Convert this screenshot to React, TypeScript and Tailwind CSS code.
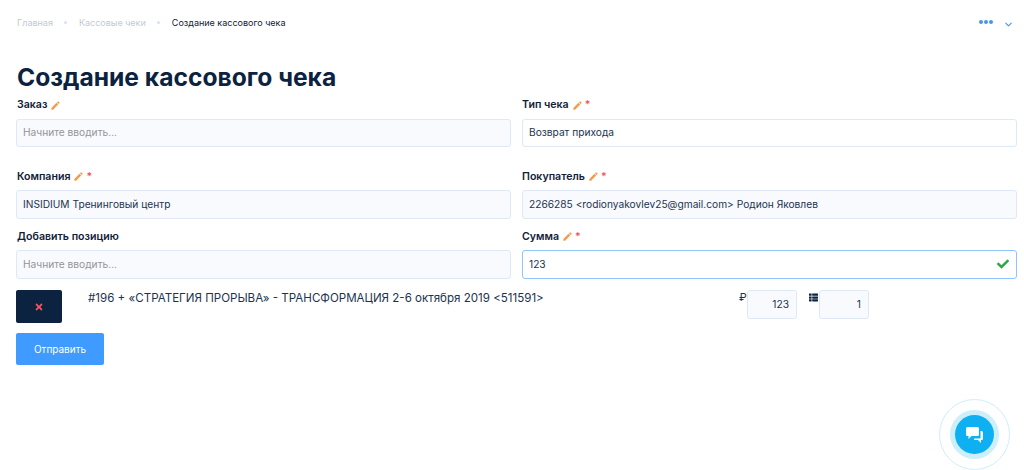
import { MdEdit } from "react-icons/md";
import { FaCheck, FaThList, FaTimes } from "react-icons/fa";
import { ChevronDown } from "lucide-react";

const font = { fontFamily: "Inter, 'Noto Sans', sans-serif" };

const Label = ({ text, required }: { text: string; required?: boolean }) => (
  <div className="flex items-center h-[14px] text-[10.6px] leading-[14px] font-semibold text-[#0f2138]">
    <span>{text}</span>
    {text !== "Добавить позицию" && <MdEdit className="ml-[3px] text-[11px] text-[#f59a4c]" />}
    {required && <span className="ml-[2px] text-[#f8535e]">*</span>}
  </div>
);

const Field = ({
  value,
  placeholder,
  white,
  active,
}: {
  value?: string;
  placeholder?: string;
  white?: boolean;
  active?: boolean;
}) => (
  <div
    className={`mt-[6.5px] flex h-[28.5px] items-center justify-between rounded-[3px] border px-[6px] text-[10.2px] ${
      active ? "border-[#90c4fb] bg-white" : white ? "border-[#dfe9f5] bg-white" : "border-[#dfe9f5] bg-[#f8fafd]"
    } ${value ? "text-[#1c3350]" : "text-[#939598]"}`}
  >
    <span>{value || placeholder}</span>
    {active && <FaCheck className="mr-[1px] text-[12px] text-[#28a745]" />}
  </div>
);

const SmallBox = ({ value }: { value: string }) => (
  <div className="flex h-[29px] w-[50px] items-center justify-end rounded-[3px] border border-[#dfe9f5] bg-[#f8fafd] pr-[7px] text-[10.2px] text-[#1c3350]">
    {value}
  </div>
);

const App = () => {
  return (
    <div className="relative h-[470px] w-[1024px] overflow-hidden bg-white" style={font}>
      <div className="flex h-[44px] items-center justify-between pl-[17px] pr-[10px]">
        <div className="flex items-center text-[9px] mt-[1px]">
          <span className="text-[#bfcad6]">Главная</span>
          <span className="mx-[11.5px] h-[3px] w-[3px] rounded-full bg-[#d4e4f6]" />
          <span className="text-[#bfcad6]">Кассовые чеки</span>
          <span className="mx-[11.5px] h-[3px] w-[3px] rounded-full bg-[#d4e4f6]" />
          <span className="text-[#0f2138]">Создание кассового чека</span>
        </div>
        <div className="flex items-center">
          <div className="flex gap-[1px]">
            <span className="h-[4px] w-[4px] rounded-full bg-[#4a94f0]" />
            <span className="h-[4px] w-[4px] rounded-full bg-[#4a94f0]" />
            <span className="h-[4px] w-[4px] rounded-full bg-[#4a94f0]" />
          </div>
          <ChevronDown className="ml-[10px] mt-[4px] h-[11px] w-[11px] text-[#4a94f0]" strokeWidth={2.5} />
        </div>
      </div>

      <div className="px-[16px]">
        <h1 className="mt-[17px] h-[32px] pl-[1px] text-[24.6px] font-bold leading-[32px] text-[#0b2340]">
          Создание кассового чека
        </h1>

        <div className="mt-[5px] grid grid-cols-[495px_495px] gap-x-[11px]">
          <div className="h-[71.5px]">
            <div className="pl-[1px]">
              <Label text="Заказ" />
            </div>
            <Field placeholder="Начните вводить..." />
          </div>
          <div className="h-[71.5px]">
            <Label text="Тип чека" required />
            <Field value="Возврат прихода" white />
          </div>
          <div className="h-[60px]">
            <div className="pl-[1px]">
              <Label text="Компания" required />
            </div>
            <Field value="INSIDIUM Тренинговый центр" />
          </div>
          <div className="h-[60px]">
            <Label text="Покупатель" required />
            <Field value="2266285 <rodionyakovlev25@gmail.com> Родион Яковлев" />
          </div>
          <div>
            <div className="pl-[1px]">
              <Label text="Добавить позицию" />
            </div>
            <Field placeholder="Начните вводить..." />
          </div>
          <div>
            <Label text="Сумма" required />
            <Field value="123" active />
          </div>
        </div>

        <div className="mt-[11.5px] flex items-start">
          <div className="flex h-[33px] w-[46px] items-center justify-center rounded-[2px] bg-[#0b2340]">
            <FaTimes className="text-[10px] text-[#f8535e]" />
          </div>
          <div className="ml-[26px] w-[651px] pt-[1px] text-[11.57px] leading-[14px] text-[#1c3350]">
            #196 + «СТРАТЕГИЯ ПРОРЫВА» - ТРАНСФОРМАЦИЯ 2-6 октября 2019 &lt;511591&gt;
          </div>
          <span className="w-[8px] text-[11px] leading-[14px] text-[#1c3350]">₽</span>
          <SmallBox value="123" />
          <FaThList className="ml-[12px] mt-[3px] mr-[1px] text-[9px] text-[#0b2340]" />
          <SmallBox value="1" />
        </div>

        <button className="mt-[10px] block h-[32px] w-[88px] rounded-[2px] bg-[#3f9bff] text-[10px] text-white">
          Отправить
        </button>
      </div>

      <div className="absolute left-[939px] top-[399px] flex h-[71px] w-[71px] items-center justify-center rounded-full border border-[#cfeefb]">
        <div className="flex h-[49px] w-[49px] items-center justify-center rounded-full bg-[#cdeffc]">
          <div className="flex h-[39px] w-[39px] items-center justify-center rounded-full bg-[#0fb0f2]">
            <svg viewBox="0 0 20 20" className="h-[20px] w-[20px]" fill="white">
              <path d="M2.5 2h10A1.5 1.5 0 0 1 14 3.5v6A1.5 1.5 0 0 1 12.5 11H6.5L3.5 14v-3h-1A1.5 1.5 0 0 1 1 9.5v-6A1.5 1.5 0 0 1 2.5 2z" />
              <path d="M15.5 6h1A1.5 1.5 0 0 1 18 7.5v6a1.5 1.5 0 0 1-1.5 1.5h-.5v3l-3-3H9v-1.5h6a.5.5 0 0 0 .5-.5z" />
            </svg>
          </div>
        </div>
      </div>
    </div>
  );
};

export default App;
